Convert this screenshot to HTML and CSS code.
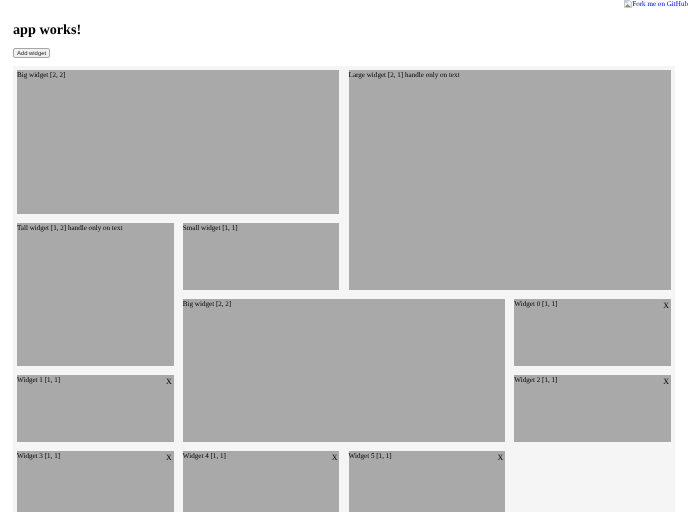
FILE: index.html
```html
<!DOCTYPE html>
<html lang="en">

<head>
    <meta charset="UTF-8">
    <meta name="viewport" content="width=device-width, initial-scale=1.0">
    <title>app works!</title>
    <link rel="stylesheet" href="styles.css">
</head>

<body>
    <a class="fork" href="#">
        <svg class="broken" viewBox="0 0 8 8" width="8" height="8" aria-hidden="true">
            <path d="M0.5 0.5H5.5L7.5 2.5V7.5H0.5Z" fill="#eef1f6" stroke="#a8a8a8" stroke-width="0.6"/>
            <path d="M1 7L3.5 4L5 5.5L7 7Z" fill="#6f9f62"/>
            <path d="M1.2 1.2H3.6V3H1.2Z" fill="#b4c9ee"/>
        </svg>Fork me on GitHub</a>

    <h1 class="title">app works!</h1>
    <button class="add-btn">Add widget</button>

    <div class="grid">
        <div class="widget w2 h2"><span>Big widget [2, 2]</span></div>
        <div class="widget w2 h3"><span>Large widget [2, 1] handle only on text</span></div>
        <div class="widget h2"><span>Tall widget [1, 2] handle only on text</span></div>
        <div class="widget"><span>Small widget [1, 1]</span></div>
        <div class="widget w2 h2"><span>Big widget [2, 2]</span></div>
        <div class="widget"><span>Widget 0 [1, 1]</span><span class="close">X</span></div>
        <div class="widget"><span>Widget 1 [1, 1]</span><span class="close">X</span></div>
        <div class="widget"><span>Widget 2 [1, 1]</span><span class="close">X</span></div>
        <div class="widget"><span>Widget 3 [1, 1]</span><span class="close">X</span></div>
        <div class="widget"><span>Widget 4 [1, 1]</span><span class="close">X</span></div>
        <div class="widget"><span>Widget 5 [1, 1]</span><span class="close">X</span></div>
    </div>
</body>

</html>
```

FILE: styles.css
```css
html {
    height: 100%;
    overflow: hidden;
}

body {
    margin: 0;
    padding: 0 12.9px 0 13px;
    font-family: "Liberation Serif", serif;
    font-size: 7.1px;
    color: #000;
    text-rendering: geometricPrecision;
    transform: translateZ(0);
}

.fork {
    position: absolute;
    top: 0;
    right: 0;
    color: #0000ee;
    font-size: 7.1px;
    line-height: 8px;
    text-decoration: none;
    white-space: nowrap;
}

.broken {
    vertical-align: top;
}

.title {
    margin: 0;
    padding-top: 21px;
    font-size: 14.2px;
    line-height: 19px;
    font-weight: bold;
}

.add-btn {
    display: block;
    width: 37px;
    height: 10px;
    margin-top: 8px;
    padding: 0;
    font-family: "Liberation Sans", sans-serif;
    font-size: 5.9px;
    line-height: 8px;
    color: #222;
    background-color: #f0f0f0;
    border: 1px solid #a6a6a6;
    border-radius: 2px;
}

.grid {
    display: grid;
    grid-template-columns: repeat(4, 156.7px);
    grid-auto-rows: 67.2px;
    gap: 9px 9.1px;
    margin-top: 8px;
    padding: 4.4px 4px;
    background-color: #f5f5f5;
}

.widget {
    display: flex;
    justify-content: space-between;
    align-items: flex-start;
    padding-top: 1px;
    line-height: 8px;
    background-color: #a9a9a9;
}

.w2 {
    grid-column: span 2;
}

.h2 {
    grid-row: span 2;
}

.h3 {
    grid-row: span 3;
}

.close {
    margin: 2px 2px 0 0;
    font-size: 8px;
}
```
